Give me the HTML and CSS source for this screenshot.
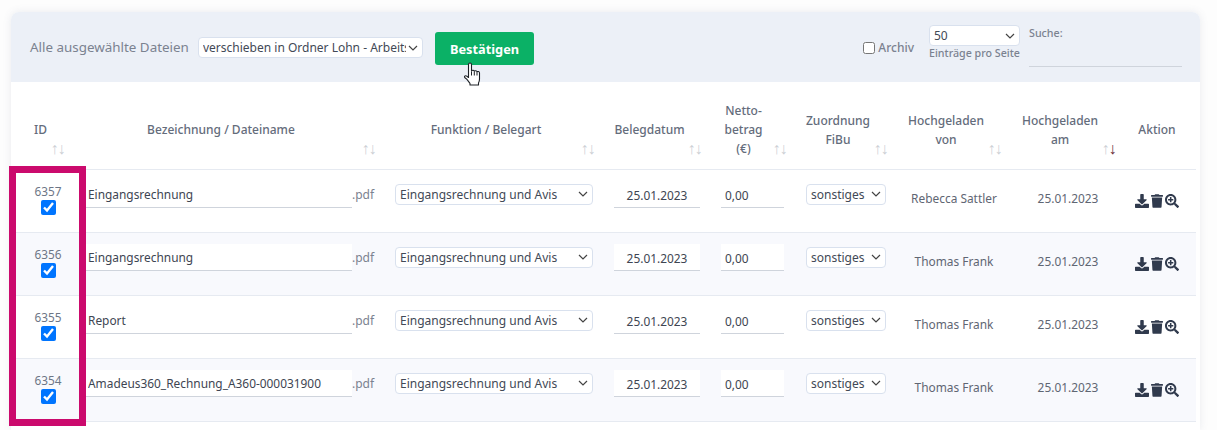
FILE: index.html
```html
<!DOCTYPE html>
<html lang="de">
<head>
<meta charset="utf-8">
<title>Dateien</title>
<link rel="stylesheet" href="styles.css">
</head>
<body>
<svg class="defs" aria-hidden="true">
  <symbol id="i-download" viewBox="0 0 512 512"><path d="M216 0h80c13.300 0 24 10.700 24 24v168h87.700c17.800 0 26.700 21.500 14.100 34.100L269.700 378.300c-7.500 7.500-19.800 7.500-27.300 0L90.100 226.100c-12.600-12.600-3.700-34.100 14.100-34.100H192V24c0-13.300 10.700-24 24-24zm296 376v112c0 13.300-10.700 24-24 24H24c-13.300 0-24-10.700-24-24V376c0-13.300 10.700-24 24-24h146.700l49 49c20.100 20.100 52.500 20.100 72.600 0l49-49H488c13.300 0 24 10.700 24 24z"/></symbol>
  <symbol id="i-trash" viewBox="0 0 448 512"><path d="M432 32H312l-9.400-18.700A24 24 0 0 0 281.100 0H166.800a23.720 23.720 0 0 0-21.400 13.300L136 32H16A16 16 0 0 0 0 48v32a16 16 0 0 0 16 16h416a16 16 0 0 0 16-16V48a16 16 0 0 0-16-16zM53.200 467a48 48 0 0 0 47.900 45h245.800a48 48 0 0 0 47.900-45L416 128H32z"/></symbol>
  <symbol id="i-zoom" viewBox="0 0 512 512"><path d="M304 192v32c0 6.600-5.400 12-12 12h-56v56c0 6.600-5.400 12-12 12h-32c-6.600 0-12-5.400-12-12v-56h-56c-6.600 0-12-5.400-12-12v-32c0-6.600 5.400-12 12-12h56v-56c0-6.600 5.400-12 12-12h32c6.600 0 12 5.400 12 12v56h56c6.600 0 12 5.400 12 12zm201 284.700L476.700 505c-9.400 9.400-24.600 9.400-33.900 0L343 405.300c-4.500-4.500-7-10.600-7-17V372c-35.300 27.600-79.700 44-128 44C93.100 416 0 322.900 0 208S93.100 0 208 0s208 93.100 208 208c0 48.300-16.400 92.700-44 128h16.300c6.400 0 12.500 2.500 17 7l99.700 99.700c9.300 9.400 9.300 24.600 0 34zM344 208c0-75.200-60.800-136-136-136S72 132.800 72 208s60.800 136 136 136 136-60.800 136-136z"/></symbol>
</svg>
<main class="card">
  <header class="toolbar">
    <div class="bulk">
      <label class="bulk-label" for="bulk-action">Alle ausgewählte Dateien</label>
      <select id="bulk-action" class="select bulk-select"><option>verschieben in Ordner Lohn - Arbeitsverträge</option></select>
      <span class="confirm-wrap">
        <button class="confirm" type="button">Bestätigen</button>
        <svg class="cursor" viewBox="0 0 17 24" width="18" height="24" aria-hidden="true"><path d="M5 13.500V2.800C5 1.800 5.600 1 6.500 1S8 1.800 8 2.800V9c.3-1 2.500-1 2.800.2.500-.8 2.400-.7 2.700.5.600-.5 2.500-.3 2.500 1.300v6c0 1.800-.4 3-1 4v2H6.500v-1.500c-1-1.300-2-3-3.300-4.300L1.200 15.500c-.5-.8 0-1.800 1-1.800.8 0 1.800.8 2.800 1.800z" fill="#fff" stroke="#1d2126" stroke-width="1.100" stroke-linejoin="round"/><path d="M8 9.500v4M10.800 9.500v4M13.500 10v3.500" fill="none" stroke="#1d2126" stroke-width="1"/></svg>
      </span>
    </div>
    <div class="filters">
      <label class="archive"><input type="checkbox" class="archive-box">Archiv</label>
      <div class="per-page">
        <select class="select per-page-select"><option>50</option></select>
        <span class="per-page-label">Einträge pro Seite</span>
      </div>
      <div class="search">
        <label class="search-label" for="search">Suche:</label>
        <input id="search" class="search-input" type="text">
      </div>
    </div>
  </header>
  <table class="files">
    <colgroup>
      <col class="c-id"><col class="c-name"><col class="c-func"><col class="c-date"><col class="c-net"><col class="c-fibu"><col class="c-by"><col class="c-at"><col class="c-act">
    </colgroup>
    <thead>
      <tr>
        <th class="th-id">ID<span class="sort"><i>↑</i><i>↓</i></span></th>
        <th class="th-name">Bezeichnung / Dateiname<span class="sort"><i>↑</i><i>↓</i></span></th>
        <th class="th-func">Funktion / Belegart<span class="sort"><i>↑</i><i>↓</i></span></th>
        <th class="th-date">Belegdatum<span class="sort"><i>↑</i><i>↓</i></span></th>
        <th class="th-net">Netto-<br>betrag<br>(€)<span class="sort"><i>↑</i><i>↓</i></span></th>
        <th class="th-fibu">Zuordnung<br>FiBu<span class="sort"><i>↑</i><i>↓</i></span></th>
        <th class="th-by">Hochgeladen<br>von<span class="sort"><i>↑</i><i>↓</i></span></th>
        <th class="th-at">Hochgeladen<br>am<span class="sort"><i>↑</i><i class="active">↓</i></span></th>
        <th class="th-act">Aktion</th>
      </tr>
    </thead>
    <tbody>
      <tr>
        <td class="td-id"><span class="id">6357</span><input type="checkbox" class="pick" checked></td>
        <td class="td-name"><div class="name"><input class="line name-input" value="Eingangsrechnung"><span class="ext">.pdf</span></div></td>
        <td class="td-func"><select class="select func"><option>Eingangsrechnung und Avis</option></select></td>
        <td class="td-date"><input class="line date" value="25.01.2023"></td>
        <td class="td-net"><input class="line net" value="0,00"></td>
        <td class="td-fibu"><select class="select fibu"><option>sonstiges</option></select></td>
        <td class="td-text">Rebecca Sattler</td>
        <td class="td-text">25.01.2023</td>
        <td class="td-act"><svg class="ic ic-wide"><use href="#i-download"/></svg><svg class="ic ic-trash"><use href="#i-trash"/></svg><svg class="ic ic-wide"><use href="#i-zoom"/></svg></td>
      </tr>
      <tr class="alt">
        <td class="td-id"><span class="id">6356</span><input type="checkbox" class="pick" checked></td>
        <td class="td-name"><div class="name"><input class="line name-input" value="Eingangsrechnung"><span class="ext">.pdf</span></div></td>
        <td class="td-func"><select class="select func"><option>Eingangsrechnung und Avis</option></select></td>
        <td class="td-date"><input class="line date" value="25.01.2023"></td>
        <td class="td-net"><input class="line net" value="0,00"></td>
        <td class="td-fibu"><select class="select fibu"><option>sonstiges</option></select></td>
        <td class="td-text">Thomas Frank</td>
        <td class="td-text">25.01.2023</td>
        <td class="td-act"><svg class="ic ic-wide"><use href="#i-download"/></svg><svg class="ic ic-trash"><use href="#i-trash"/></svg><svg class="ic ic-wide"><use href="#i-zoom"/></svg></td>
      </tr>
      <tr>
        <td class="td-id"><span class="id">6355</span><input type="checkbox" class="pick" checked></td>
        <td class="td-name"><div class="name"><input class="line name-input" value="Report"><span class="ext">.pdf</span></div></td>
        <td class="td-func"><select class="select func"><option>Eingangsrechnung und Avis</option></select></td>
        <td class="td-date"><input class="line date" value="25.01.2023"></td>
        <td class="td-net"><input class="line net" value="0,00"></td>
        <td class="td-fibu"><select class="select fibu"><option>sonstiges</option></select></td>
        <td class="td-text">Thomas Frank</td>
        <td class="td-text">25.01.2023</td>
        <td class="td-act"><svg class="ic ic-wide"><use href="#i-download"/></svg><svg class="ic ic-trash"><use href="#i-trash"/></svg><svg class="ic ic-wide"><use href="#i-zoom"/></svg></td>
      </tr>
      <tr class="alt">
        <td class="td-id"><span class="id">6354</span><input type="checkbox" class="pick" checked></td>
        <td class="td-name"><div class="name"><input class="line name-input" value="Amadeus360_Rechnung_A360-000031900"><span class="ext">.pdf</span></div></td>
        <td class="td-func"><select class="select func"><option>Eingangsrechnung und Avis</option></select></td>
        <td class="td-date"><input class="line date" value="25.01.2023"></td>
        <td class="td-net"><input class="line net" value="0,00"></td>
        <td class="td-fibu"><select class="select fibu"><option>sonstiges</option></select></td>
        <td class="td-text">Thomas Frank</td>
        <td class="td-text">25.01.2023</td>
        <td class="td-act"><svg class="ic ic-wide"><use href="#i-download"/></svg><svg class="ic ic-trash"><use href="#i-trash"/></svg><svg class="ic ic-wide"><use href="#i-zoom"/></svg></td>
      </tr>
    </tbody>
  </table>
  <div class="highlight" aria-hidden="true"></div>
</main>
</body>
</html>
```
FILE: styles.css
```css
* { box-sizing: border-box; }
html, body { height: 430px; overflow: hidden; }
body {
  margin: 0;
  padding: 12px 17px 0 11px;
  background: #fdfdfd;
  font-family: "Noto Sans", "Open Sans", sans-serif;
  font-size: 12px;
  color: #6e7583;
}
.defs { display: none; }
.card {
  position: relative;
  height: 418px;
  background: #fff;
  border-radius: 8px 8px 0 0;
  box-shadow: 0 0 8px rgba(90, 100, 130, .12);
}
.toolbar {
  height: 70px;
  display: flex;
  justify-content: space-between;
  background: #ecf0f7;
  border-radius: 8px 8px 0 0;
  padding: 0 18px 0 19px;
}
.bulk { display: flex; align-items: flex-start; padding-top: 20px; }
.bulk-label { font-size: 13.400px; line-height: 31px; color: #7b8290; width: 168px; }
.select {
  appearance: none;
  font-family: inherit;
  font-size: 12px;
  color: #424956;
  background-color: #fff;
  background-image: url("data:image/svg+xml,%3Csvg xmlns='http://www.w3.org/2000/svg' width='10' height='6' viewBox='0 0 10 6'%3E%3Cpath d='M1 1l4 4 4-4' fill='none' stroke='%23444' stroke-width='1.200'/%3E%3C/svg%3E");
  background-repeat: no-repeat;
  background-position: right 4px center;
  border: 1px solid #d9e1ee;
  border-radius: 4px;
  height: 21px;
  padding: 0 16px 0 4px;
}
.bulk-select { width: 225px; margin-top: 5px; }
.confirm-wrap { position: relative; margin-left: 12px; }
.confirm {
  display: block;
  width: 99px;
  height: 33px;
  border: 0;
  border-radius: 3px;
  background: #0bb166;
  color: #fff;
  font-family: inherit;
  font-size: 12.800px;
  font-weight: 700;
}
.cursor { position: absolute; left: 28px; top: 30px; }
.filters { display: flex; align-items: flex-start; }
.archive { display: flex; align-items: center; margin-top: 29px; font-size: 12px; font-weight: 500; color: #7b8290; line-height: 14px; }
.archive-box { width: 12px; height: 12px; margin: 0 3px 0 1px; }
.per-page { display: flex; flex-direction: column; width: 91px; margin-left: 15px; padding-top: 13px; }
.per-page-select { width: 91px; }
.per-page-label { font-size: 10.700px; font-weight: 500; color: #7b8290; line-height: 16px; white-space: nowrap; margin-top: -1px; }
.search { display: flex; flex-direction: column; width: 153px; margin-left: 9px; padding-top: 14px; }
.search-label { font-size: 10.700px; font-weight: 500; color: #7b8290; line-height: 14px; }
.search-input { height: 27px; border: 0; border-bottom: 1px solid #cfd4dc; background: transparent; }
.files {
  width: 1184px;
  margin-left: 1px;
  table-layout: fixed;
  border-collapse: collapse;
}
.c-id { width: 72px; }
.c-name { width: 296px; }
.c-func { width: 225px; }
.c-date { width: 107px; }
.c-net { width: 83px; }
.c-fibu { width: 100px; }
.c-by { width: 115px; }
.c-at { width: 113px; }
.c-act { width: 73px; }
thead tr { height: 87px; }
th {
  position: relative;
  font-size: 12px;
  font-weight: 500;
  line-height: 19px;
  color: #646c7b;
  text-align: center;
  vertical-align: middle;
  padding: 9px 0 0 0;
  border-bottom: 1px solid #e6eaf1;
}
.th-id { text-align: left; padding-left: 22px; }
.th-name { padding-right: 22px; }
.th-func { padding-right: 13px; }
.th-date { padding-right: 18px; }
.th-net { padding-right: 20px; }
.th-fibu { padding-right: 14px; }
.th-by { padding-right: 13px; }
.th-at { padding-right: 13px; }
.th-act { padding-right: 5px; }
.sort {
  position: absolute;
  right: 7px;
  bottom: 13px;
  display: flex;
  font-size: 16px;
  line-height: 16px;
  color: #cdd0d5;
  font-weight: 400;
}
.th-id .sort { right: auto; left: 39px; }
.th-name .sort { right: 4px; }
.th-func .sort { right: 10px; }
.th-date .sort { right: 10px; }
.th-net .sort { right: 8px; }
.th-by .sort { right: 8px; }
.sort i { font-style: normal; width: 7px; display: flex; justify-content: center; }
.sort .active { color: #6b3038; }
tbody tr { height: 63px; }
tbody tr.alt { background: #f8f9fd; }
td {
  padding: 0;
  vertical-align: top;
  border-bottom: 1px solid #e6eaf1;
  font-size: 12px;
  color: #5f6673;
}
.td-id { text-align: center; padding-top: 12px; }
.id { display: block; line-height: 18px; font-size: 11.800px; color: #6d7686; }
.pick { display: block; width: 15px; height: 15px; margin: 0 auto; accent-color: #0075ff; }
.name { display: flex; align-items: flex-start; margin-top: 11px; }
.name-input { width: 268px; flex: none; }
.ext { font-size: 12px; line-height: 28px; color: #7b8290; }
.line {
  height: 27px;
  border: 0;
  border-bottom: 1px solid #cfd4dc;
  background: #fff;
  font-family: inherit;
  font-size: 11.900px;
  color: #3e4552;
  padding: 1px 4px 0;
  border-radius: 0;
  outline: none;
}
.td-func { padding: 14px 0 0 15px; }
.func { width: 198px; }
.td-date { padding: 11px 0 0 9px; }
.date { width: 86px; text-align: center; padding-top: 3px; }
.td-net { padding: 11px 0 0 9px; }
.net { width: 63px; padding-top: 3px; }
.td-fibu { padding: 14px 0 0 11px; }
.fibu { width: 80px; }
.td-text { text-align: center; padding: 19px 0 0 3px; line-height: 18px; font-size: 11.900px; }
.td-act { padding: 24px 5px 0 0; text-align: center; white-space: nowrap; }
.ic { fill: #303a4d; vertical-align: top; height: 14px; }
.ic-wide { width: 14px; }
.ic-trash { width: 12px; margin: 0 2px; }
.highlight {
  position: absolute;
  left: -2px;
  top: 154px;
  width: 77px;
  height: 260px;
  border: 7px solid #cb0a6d;
}
```
